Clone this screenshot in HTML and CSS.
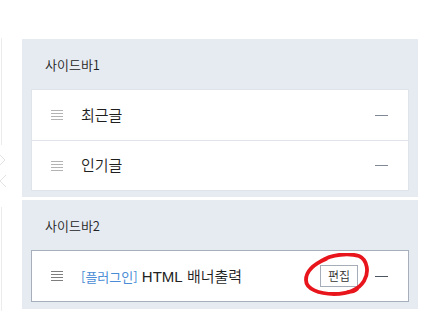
FILE: index.html
```html
<!DOCTYPE html>
<html lang="ko">
<head>
<meta charset="utf-8">
<link rel="stylesheet" href="styles.css">
</head>
<body>
<div class="page">
  <div class="rail">
    <div class="rail-line top"></div>
    <svg class="rail-arrows" width="8" height="54" viewBox="0 0 8 54">
      <polyline points="0,7 5,12 0,17" fill="none" stroke="#e2e2e2" stroke-width="1"/>
      <polyline points="6,27 0,33 6,39" fill="none" stroke="#e2e2e2" stroke-width="1"/>
    </svg>
    <div class="rail-line bottom"></div>
  </div>
  <div class="main">
    <section class="panel first">
      <div class="panel-title">사이드바1</div>
      <ul class="list">
        <li class="item">
          <span class="handle"><i></i><i></i><i></i><i></i></span>
          <span class="label">최근글</span>
          <span class="dash"></span>
        </li>
        <li class="item">
          <span class="handle"><i></i><i></i><i></i><i></i></span>
          <span class="label">인기글</span>
          <span class="dash"></span>
        </li>
      </ul>
    </section>
    <section class="panel second">
      <div class="panel-title">사이드바2</div>
      <ul class="list active">
        <li class="item">
          <span class="handle dark"><i></i><i></i><i></i><i></i></span>
          <span class="label"><span class="tag">[플러그인]</span> <span class="latin">HTML</span> 배너출력</span>
          <span class="edit-wrap">
            <button class="edit">편집</button>
            <svg class="mark" width="66" height="46" viewBox="0 0 66 46">
              <path d="M17 8 C 28 1, 45 0, 55 3 C 64 7, 65 20, 60 28 C 55 36, 45 41, 30 41 C 15 41, 2 36, 2 27 C 2 18, 10 11, 22 6 M44 39 C 48 39, 51 38, 53 36" fill="none" stroke="#e8161c" stroke-width="3.8" stroke-linecap="round" stroke-linejoin="round"/>
            </svg>
          </span>
          <span class="dash dark"></span>
        </li>
      </ul>
    </section>
  </div>
</div>
</body>
</html>
```

FILE: styles.css
```css
* { box-sizing: border-box; }
html, body { margin: 0; padding: 0; background: #fff; }
body {
  font-family: "Noto Sans CJK KR", "Noto Sans", sans-serif;
  color: #333;
  width: 446px;
  height: 332px;
  overflow: hidden;
}
.page { display: flex; }
.rail {
  width: 22px;
  flex: none;
  display: flex;
  flex-direction: column;
  padding-top: 38px;
}
.rail-line { width: 2px; border-left: 1px solid #ececec; margin-left: 1px; }
.rail-line.top { height: 107px; }
.rail-line.bottom { height: 104px; margin-top: 5px; }
.rail-arrows { display: block; margin-top: 3px; }
.main {
  width: 396px;
  padding-top: 39px;
  display: flex;
  flex-direction: column;
  gap: 3px;
}
.panel {
  background: #e5ebf1;
  padding: 0 9px 7px;
}
.panel.first { padding-bottom: 6px; }
.panel-title {
  height: 50px;
  display: flex;
  align-items: center;
  padding-left: 14px;
  padding-top: 1px;
  font-size: 13px;
  font-weight: 350;
  color: #222;
}
.list {
  list-style: none;
  margin: 0;
  padding: 0;
  background: #fff;
  border: 1px solid #dfe4ea;
}
.list.active { border-color: #a7afbb; }
.item {
  height: 50px;
  display: flex;
  align-items: center;
  padding: 0 20px 2px 19px;
}
.item + .item { border-top: 1px solid #dfe4ea; }
.handle {
  width: 12px;
  display: flex;
  flex-direction: column;
  gap: 2px;
  margin-right: 18px;
  margin-top: 2px;
}
.handle i { display: block; height: 1px; background: #b3b3b3; }
.handle.dark i { background: #7e7e7e; }
.label {
  flex: 1;
  font-size: 15px;
  font-weight: 350;
  color: #1e1e1e;
}
.latin { font-family: "Liberation Sans", sans-serif; font-weight: 400; color: #222; }
.tag { color: #4a8cd6; font-size: 13px; font-weight: 400; }
.dash { width: 13px; height: 1px; background: #7f8894; margin-top: 2px; }
.dash.dark { background: #4c5560; }
.edit-wrap { position: relative; margin-right: 17px; display: flex; margin-top: 2px; }
.edit {
  width: 38px;
  height: 22px;
  padding: 0;
  background: #fff;
  border: 1px solid #a5adb8;
  font-family: "Noto Sans CJK KR", sans-serif;
  font-weight: 350;
  font-size: 12px;
  color: #333;
  line-height: 20px;
}
.mark {
  position: absolute;
  left: -16px;
  top: -12px;
  pointer-events: none;
}
```
